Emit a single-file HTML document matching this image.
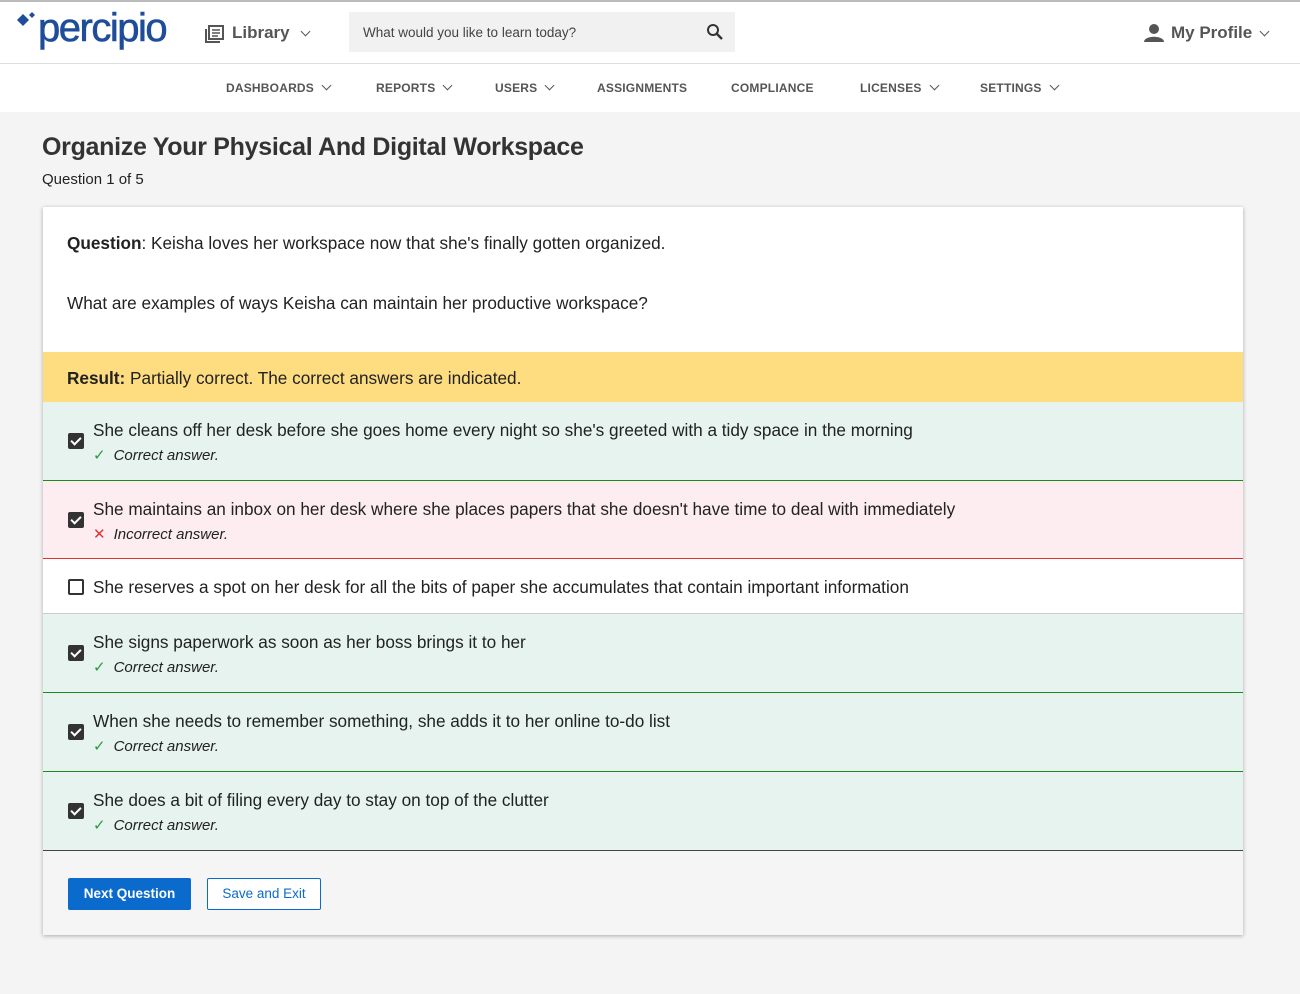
<!DOCTYPE html>
<html><head><meta charset="utf-8"><style>
*{box-sizing:border-box;margin:0;padding:0}
body{width:1300px;height:994px;background:#f4f4f4;font-family:"Liberation Sans",sans-serif;color:#222;overflow:hidden;position:relative}
.hdr{position:absolute;top:0;left:0;width:1300px;height:64px;background:#fff;border-top:2px solid #bbb;border-bottom:1px solid #ddd}
.nav{position:absolute;top:64px;left:0;width:1300px;height:48px;background:#fff}
.nav span{position:absolute;top:17px;font-size:12px;font-weight:bold;color:#555;letter-spacing:.2px}
.chev{display:inline-block;width:7px;height:7px;border-right:1.6px solid #555;border-bottom:1.6px solid #555;transform:rotate(45deg);margin-left:9px;position:relative;top:-3px}
.card{position:absolute;left:43px;top:207px;width:1200px;height:728px;background:#f5f5f5;box-shadow:0 1px 4px rgba(0,0,0,.3)}
.row{position:absolute;left:0;width:1200px;font-size:17.2px}
.cb{position:absolute;left:25px;width:16px;height:16px;border-radius:2px;background:#333}
.cb:after{content:"";position:absolute;left:5px;top:2px;width:4px;height:8px;border-right:2px solid #fff;border-bottom:2px solid #fff;transform:rotate(45deg)}
.cb.e{background:#fff;border:2px solid #333}.cb.e:after{display:none}
.t{position:absolute;left:50px;top:18px;white-space:nowrap}
.s{position:absolute;left:50px;top:44px;font-size:15px;font-style:italic}
.g{background:#e6f3ee;border-bottom:1px solid #1a8a1a}
.ck{color:#2a9a3a;font-style:normal;margin-right:8px}
</style></head><body>
<div class="hdr">
<svg style="position:absolute;left:16px;top:9px" width="24" height="22"><path d="M1 9 L7 3 L13 9 L7 15Z" fill="#1f4d9a"/><path d="M13 4 L16 1 L19 4 L16 7Z" fill="#1f4d9a"/></svg>
<div style="position:absolute;left:38px;top:4px;font-size:40px;color:#1f4d9a;letter-spacing:-1.5px;-webkit-text-stroke:.6px #1f4d9a">percipio</div>
<svg style="position:absolute;left:205px;top:23px" width="20" height="18"><rect x="4" y="1" width="14" height="13" fill="none" stroke="#555" stroke-width="2"/><path d="M1 4 V17 H15" fill="none" stroke="#555" stroke-width="2"/><path d="M7 5H15M7 8H15M7 11H13" stroke="#555" stroke-width="1.5"/></svg>
<div style="position:absolute;left:232px;top:21px;font-size:17px;font-weight:bold;color:#555">Library<span class="chev" style="margin-left:12px"></span></div>
<div style="position:absolute;left:349px;top:10px;width:386px;height:40px;background:#f1f1f1"><span style="position:absolute;left:14px;top:13px;font-size:13.5px;color:#444">What would you like to learn today?</span>
<svg style="position:absolute;left:357px;top:11px" width="18" height="18"><circle cx="7" cy="7" r="5" fill="none" stroke="#333" stroke-width="2"/><path d="M11 11L16 16" stroke="#333" stroke-width="2.4"/></svg></div>
<svg style="position:absolute;left:1144px;top:21px" width="20" height="20"><circle cx="10" cy="6" r="5" fill="#555"/><path d="M0 19 C0 12 20 12 20 19Z" fill="#555"/></svg>
<div style="position:absolute;left:1171px;top:21px;font-size:17px;font-weight:bold;color:#555">My Profile<span class="chev"></span></div>
</div>
<div class="nav">
<span style="left:226px">DASHBOARDS<i class="chev"></i></span>
<span style="left:376px">REPORTS<i class="chev"></i></span>
<span style="left:495px">USERS<i class="chev"></i></span>
<span style="left:597px">ASSIGNMENTS</span>
<span style="left:731px">COMPLIANCE</span>
<span style="left:860px">LICENSES<i class="chev"></i></span>
<span style="left:980px">SETTINGS<i class="chev"></i></span>
</div>
<div style="position:absolute;left:42px;top:133px;font-size:25px;font-weight:bold;color:#333;letter-spacing:-.3px">Organize Your Physical And Digital Workspace</div>
<div style="position:absolute;left:42px;top:171px;font-size:15px">Question 1 of 5</div>
<div class="card">
<div class="row" style="top:0;height:145px;background:#fff">
<div style="position:absolute;left:24px;top:26px"><b>Question</b>: Keisha loves her workspace now that she's finally gotten organized.</div>
<div style="position:absolute;left:24px;top:86px">What are examples of ways Keisha can maintain her productive workspace?</div></div>
<div class="row" style="top:145px;height:50px;background:#fedc80"><div style="position:absolute;left:24px;top:16px"><b>Result:</b> Partially correct. The correct answers are indicated.</div></div>
<div class="row g" style="top:195px;height:79px"><div class="cb" style="top:31px"></div><div class="t">She cleans off her desk before she goes home every night so she's greeted with a tidy space in the morning</div><div class="s"><span class="ck">✓</span>Correct answer.</div></div>
<div class="row" style="top:274px;height:78px;background:#fdedf0;border-bottom:1px solid #d33"><div class="cb" style="top:31px"></div><div class="t">She maintains an inbox on her desk where she places papers that she doesn't have time to deal with immediately</div><div class="s"><span class="ck" style="color:#d33">✕</span>Incorrect answer.</div></div>
<div class="row" style="top:352px;height:55px;background:#fff;border-bottom:1px solid #ccc"><div class="cb e" style="top:20px"></div><div class="t">She reserves a spot on her desk for all the bits of paper she accumulates that contain important information</div></div>
<div class="row g" style="top:407px;height:79px"><div class="cb" style="top:31px"></div><div class="t">She signs paperwork as soon as her boss brings it to her</div><div class="s"><span class="ck">✓</span>Correct answer.</div></div>
<div class="row g" style="top:486px;height:79px"><div class="cb" style="top:31px"></div><div class="t">When she needs to remember something, she adds it to her online to-do list</div><div class="s"><span class="ck">✓</span>Correct answer.</div></div>
<div class="row g" style="top:565px;height:79px;border-bottom:1px solid #444"><div class="cb" style="top:31px"></div><div class="t">She does a bit of filing every day to stay on top of the clutter</div><div class="s"><span class="ck">✓</span>Correct answer.</div></div>
<div style="position:absolute;left:25px;top:671px;width:123px;height:32px;background:#0a6bcc;border-radius:2px;color:#fff;font-size:13.5px;font-weight:bold;text-align:center;line-height:32px">Next Question</div>
<div style="position:absolute;left:164px;top:671px;width:114px;height:32px;background:#fff;border:1px solid #0a6bcc;border-radius:2px;color:#0a6bcc;font-size:13.5px;text-align:center;line-height:30px">Save and Exit</div>
</div>
</body></html>
